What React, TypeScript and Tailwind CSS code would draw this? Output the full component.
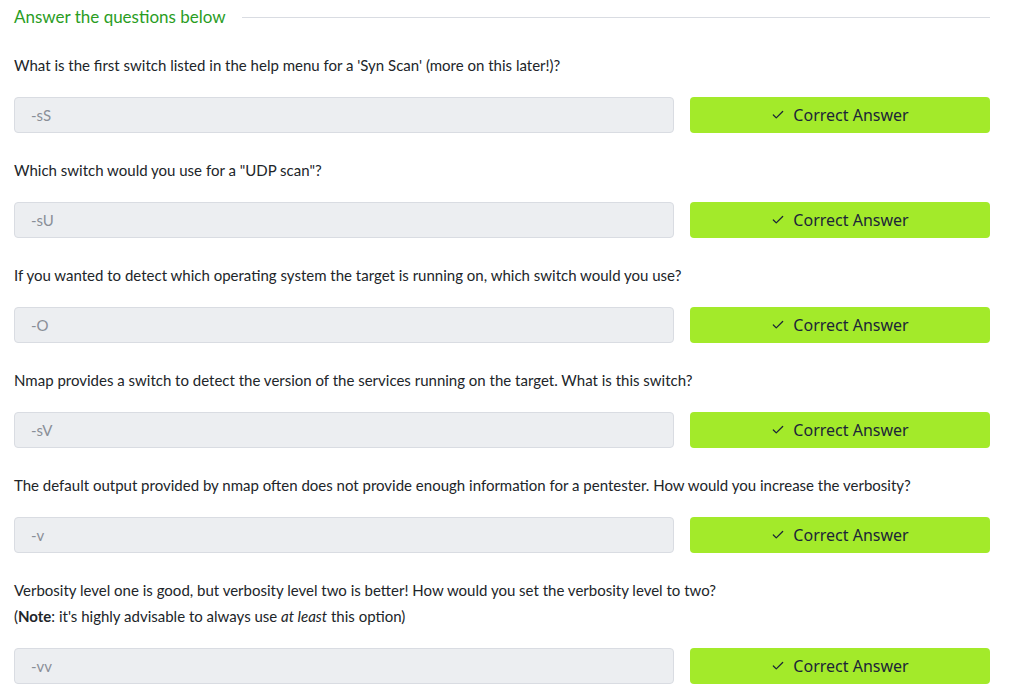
import { Check } from 'lucide-react';
import type { ReactNode } from 'react';

interface Question {
  text: ReactNode;
  answer: string;
}

const questions: Question[] = [
  { text: "What is the first switch listed in the help menu for a 'Syn Scan' (more on this later!)?", answer: '-sS' },
  { text: 'Which switch would you use for a "UDP scan"?', answer: '-sU' },
  { text: 'If you wanted to detect which operating system the target is running on, which switch would you use?', answer: '-O' },
  { text: 'Nmap provides a switch to detect the version of the services running on the target. What is this switch?', answer: '-sV' },
  { text: 'The default output provided by nmap often does not provide enough information for a pentester. How would you increase the verbosity?', answer: '-v' },
  {
    text: (
      <>
        Verbosity level one is good, but verbosity level two is better! How would you set the verbosity level to two?
        <br />
        (<strong>Note</strong>: it's highly advisable to always use <em>at least</em> this option)
      </>
    ),
    answer: '-vv',
  },
];

export default function App() {
  return (
    <div className="min-h-[698px] bg-white pl-[14px] pr-[23px] pt-[4px] font-['Lato',sans-serif] text-[#212529]">
      {/* Header */}
      <div className="flex items-center gap-[16px]">
        <h4 className="text-[17px] leading-[26px] text-[#2a9d1f]">Answer the questions below</h4>
        <div className="h-px flex-1 bg-[#d9dce2]" />
      </div>

      {/* Questions */}
      <div className="mt-[22px] flex flex-col">
        {questions.map((q, i) => (
          <div key={i} className="mb-[24px]">
            <p className="text-[15px] leading-[26px]">{q.text}</p>
            <div className="mt-[19px] flex gap-[16px]">
              <input
                readOnly
                placeholder={q.answer}
                className="h-[36px] flex-1 rounded-[4px] border border-[#d9dce2] bg-[#eceef1] px-[16px] text-[15px] placeholder-[#8a8f98] outline-none"
              />
              <button className="flex h-[36px] w-[300px] items-center justify-center gap-[8px] rounded-[4px] bg-[#a3ea2a] font-['Noto_Sans',sans-serif] text-[16px] text-[#1c2538]">
                <Check className="h-[14px] w-[14px]" strokeWidth={2.2} />
                Correct Answer
              </button>
            </div>
          </div>
        ))}
      </div>
    </div>
  );
}
